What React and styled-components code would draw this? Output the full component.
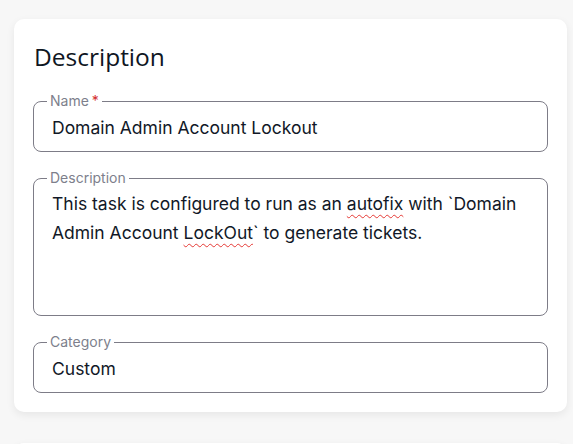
import React from "react";
import styled, { createGlobalStyle } from "styled-components";

const GlobalStyle = createGlobalStyle`
  html, body {
    margin: 0;
    padding: 0;
    background: #f7f7f7;
    font-family: Inter, "Noto Sans", sans-serif;
  }
`;

const Page = styled.div`
  display: flex;
  flex-direction: column;
  gap: 31px;
  padding: 19px 6px 0 14px;
  height: 444px;
  box-sizing: border-box;
  overflow: hidden;
`;

const Card = styled.section`
  background: #ffffff;
  border-radius: 10px;
  box-shadow: 0 3px 8px rgba(0, 0, 0, 0.07);
  padding: 20px 19px 19px 19px;
  display: flex;
  flex-direction: column;
  gap: 18px;
  flex-shrink: 0;
  min-height: ${(p) => p.minHeight || 0}px;
`;

const Title = styled.h2`
  margin: 0 0 0 1px;
  font-family: "Open Sans", "Noto Sans", sans-serif;
  font-weight: 400;
  font-size: 24.5px;
  line-height: 36px;
  color: #0f1623;
`;

const Field = styled.fieldset`
  margin: 0;
  padding: 0 18px;
  border: 1px solid #7d7c87;
  border-radius: 8px;
  height: ${(p) => p.height}px;
  box-sizing: border-box;
  min-width: 0;
`;

const Legend = styled.legend`
  padding: 0 3px;
  margin-left: -5px;
  font-family: Inter, sans-serif;
  font-size: 14px;
  line-height: 16px;
  color: #7d7f8c;
`;

const Required = styled.span`
  color: #d32f2f;
  margin-left: 3px;
`;

const Value = styled.div`
  font-family: Inter, sans-serif;
  font-size: 17.5px;
  line-height: 29px;
  color: #111827;
  padding-top: ${(p) => p.top || 0}px;
`;

const Misspelled = styled.span`
  text-decoration: underline wavy #e53935;
  text-decoration-thickness: 1px;
  text-underline-offset: 4px;
`;

export default function App() {
  return (
    <Page>
      <GlobalStyle />
      <Card>
        <Title>Description</Title>
        <Field height={59}>
          <Legend>
            Name<Required>*</Required>
          </Legend>
          <Value top={4}>Domain Admin Account Lockout</Value>
        </Field>
        <Field height={146}>
          <Legend>Description</Legend>
          <Value top={3}>
            This task is configured to run as an <Misspelled>autofix</Misspelled>{" "}
            with `Domain Admin Account <Misspelled>LockOut</Misspelled>` to
            generate tickets.
          </Value>
        </Field>
        <Field height={59}>
          <Legend>Category</Legend>
          <Value top={4}>Custom</Value>
        </Field>
      </Card>
      <Card minHeight={60} />
    </Page>
  );
}
